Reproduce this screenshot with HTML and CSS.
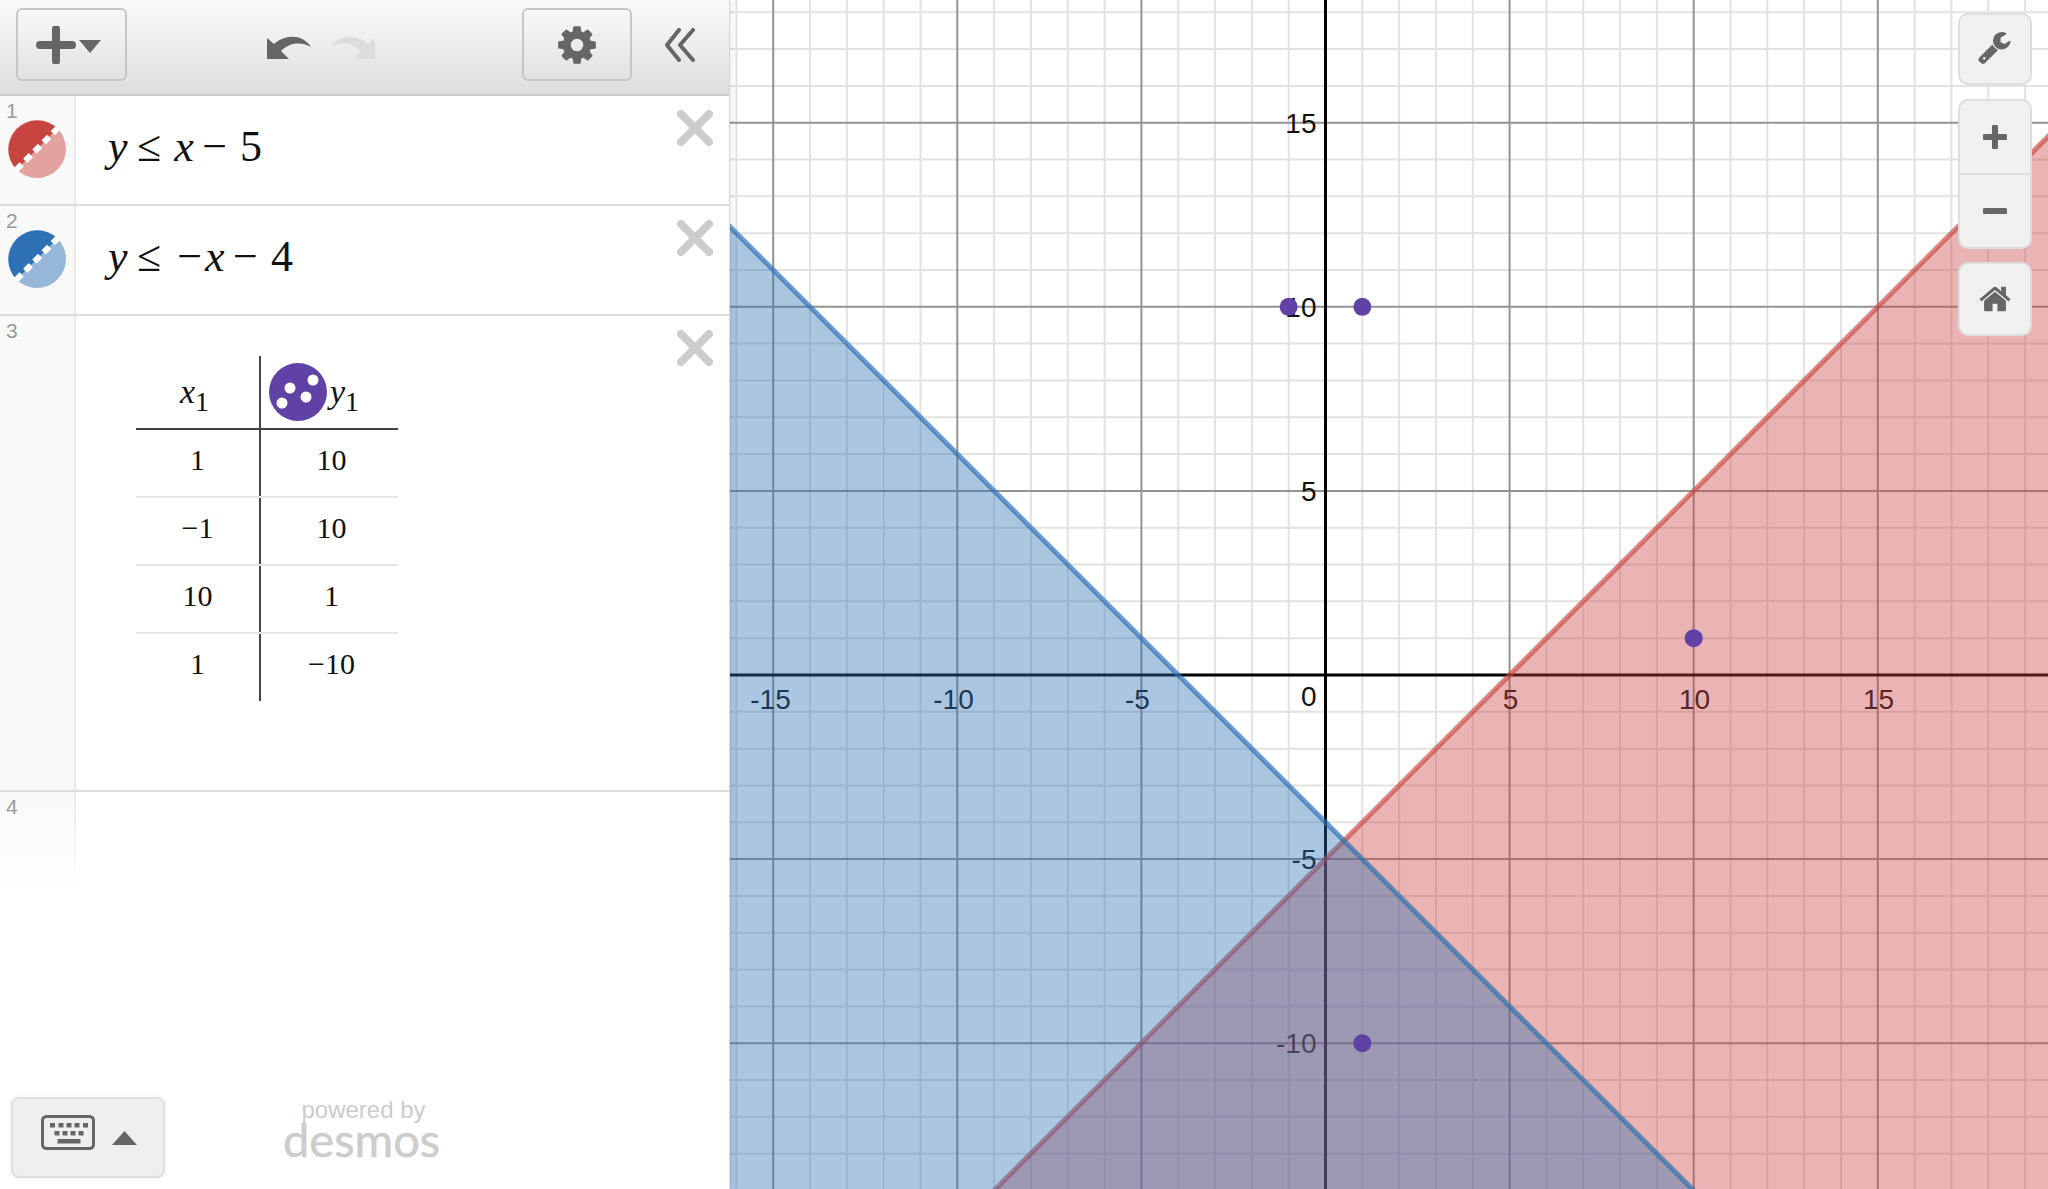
FILE: index.html
```html
<!DOCTYPE html>
<html lang="en">
<head>
    <meta charset="UTF-8">
    <title>Desmos Graphing Calculator</title>
    <link rel="stylesheet" href="styles.css">
</head>
<body>
    <div class="sidebar">
        <div class="topbar">
            <div class="btn btn-add">
                <svg width="66" height="38" viewBox="0 0 66 38">
                    <path d="M20 3V35M4 19H36" class="plus-stroke"/>
                    <path d="M43 14H65L54 27Z" class="icon-fill"/>
                </svg>
            </div>
            <div class="history">
                <svg width="44" height="24" viewBox="0 0 44 24"><path d="M0 24V3L7 9C16 1 34-3 44 12C33 6 22 8 14 16L22 24Z" class="icon-fill"/></svg>
                <svg width="44" height="24" viewBox="0 0 44 24"><path d="M44 24V3L37 9C28 1 10-3 0 12C11 6 22 8 30 16L22 24Z" class="icon-faded"/></svg>
            </div>
            <div class="btn btn-settings">
                <svg width="44" height="44" viewBox="0 0 1792 1792"><path d="M1152 896q0-106-75-181t-181-75-181 75-75 181 75 181 181 75 181-75 75-181zm512-109v222q0 12-8 23t-20 13l-185 28q-19 54-39 91 35 50 107 138 10 12 10 25t-9 23q-27 37-99 108t-94 71q-12 0-26-9l-138-108q-44 23-91 38-16 136-29 186-7 28-36 28h-222q-14 0-24.5-8.5t-11.5-21.5l-28-184q-49-16-90-37l-141 107q-10 9-25 9-14 0-25-11-126-114-165-168-7-10-7-23 0-12 8-23 15-21 51-66.5t54-70.5q-27-50-41-99l-183-27q-13-2-21-12.5t-8-23.5v-222q0-12 8-23t19-13l186-28q14-46 39-92-40-57-107-138-10-12-10-24 0-10 9-23 26-36 98.5-107.5t94.5-71.5q13 0 26 10l138 107q44-23 91-38 16-136 29-186 7-28 36-28h222q14 0 24.5 8.5t11.5 21.5l28 184q49 16 90 37l142-107q9-9 24-9 13 0 25 10 129 119 165 170 7 8 7 22 0 12-8 23-15 21-51 66.5t-54 70.5q26 50 41 98l183 28q13 2 21 12.5t8 23.5z" class="icon-fill"/></svg>
            </div>
            <svg class="collapse" width="32" height="34" viewBox="0 0 32 34"><path d="M15 2L3 17L15 32M29 2L16 17L29 32" class="chevrons"/></svg>
        </div>

        <div class="row">
            <div class="gutter">
                <div class="num">1</div>
                <svg class="swatch" width="58" height="58" viewBox="0 0 58 58">
                    <circle cx="29" cy="29" r="29" fill="#e3a19f"/>
                    <path d="M8.5 49.5A29 29 0 0 1 49.5 8.5Z" fill="#c74440"/>
                    <path d="M8 50L50 8" class="swatch-dash"/>
                </svg>
            </div>
            <div class="math">
                <i>y</i><span class="rel">≤</span><i>x</i><span class="bin">−</span><span>5</span>
            </div>
            <svg class="close" width="36" height="36" viewBox="0 0 36 36"><path d="M4 4L32 32M32 4L4 32" class="close-stroke"/></svg>
        </div>

        <div class="row">
            <div class="gutter">
                <div class="num">2</div>
                <svg class="swatch" width="58" height="58" viewBox="0 0 58 58">
                    <circle cx="29" cy="29" r="29" fill="#97b7d9"/>
                    <path d="M8.5 49.5A29 29 0 0 1 49.5 8.5Z" fill="#2d70b3"/>
                    <path d="M8 50L50 8" class="swatch-dash"/>
                </svg>
            </div>
            <div class="math">
                <i>y</i><span class="rel rel-neg">≤</span><span class="neg">−</span><i>x</i><span class="bin">−</span><span>4</span>
            </div>
            <svg class="close" width="36" height="36" viewBox="0 0 36 36"><path d="M4 4L32 32M32 4L4 32" class="close-stroke"/></svg>
        </div>

        <div class="row row-table">
            <div class="gutter">
                <div class="num">3</div>
            </div>
            <table class="xy-table">
                <tr>
                    <th class="th-x"><i>x</i><sub>1</sub></th>
                    <th>
                        <div class="th-points">
                            <svg width="58" height="58" viewBox="0 0 58 58">
                                <circle cx="29" cy="29" r="29" fill="#6042a6"/>
                                <circle cx="21" cy="25" r="5.5" fill="#fff"/>
                                <circle cx="44" cy="17" r="5.5" fill="#fff"/>
                                <circle cx="37" cy="34" r="5.5" fill="#fff"/>
                                <circle cx="13" cy="40" r="5.5" fill="#fff"/>
                            </svg>
                            <span><i>y</i><sub>1</sub></span>
                        </div>
                    </th>
                </tr>
                <tr><td>1</td><td>10</td></tr>
                <tr><td>−1</td><td>10</td></tr>
                <tr><td>10</td><td>1</td></tr>
                <tr><td>1</td><td>−10</td></tr>
            </table>
            <svg class="close" width="36" height="36" viewBox="0 0 36 36"><path d="M4 4L32 32M32 4L4 32" class="close-stroke"/></svg>
        </div>

        <div class="row row-empty">
            <div class="gutter gutter-fade">
                <div class="num">4</div>
            </div>
        </div>

        <div class="footer">
            <div class="keypad-btn">
                <svg width="54" height="35" viewBox="0 0 54 35">
                    <rect x="1.5" y="1.5" width="51" height="32" rx="4" class="kb-body"/>
                    <path d="M9 8h5v4.500h-5zM17.500 8h5v4.500h-5zM25.500 8h5v4.500h-5zM33.500 8h5v4.500h-5zM42 8h5v4.500h-5zM13.500 16h5v4.500h-5zM21.500 16h5v4.500h-5zM29.500 16h5v4.500h-5zM37.500 16h5v4.500h-5zM16.500 24h23v4.500h-23z" class="icon-fill"/>
                </svg>
                <svg width="25" height="14" viewBox="0 0 25 14"><path d="M12.500 0L25 14H0Z" class="icon-fill"/></svg>
            </div>
            <div class="powered">
                <div class="powered-by">powered by</div>
                <div class="powered-name">desmos</div>
            </div>
        </div>
    </div>

    <div class="graph">
        <svg class="plane" width="1318" height="1189" viewBox="0 0 1318 1189">
            <!-- 1 unit = 36.82px, origin at 595.5,675 -->
            <g transform="translate(595.5 675) scale(36.82 -36.82)">
                <path class="grid-minor" d="M-16-15V19M-14-15V19M-13-15V19M-12-15V19M-11-15V19M-9-15V19M-8-15V19M-7-15V19M-6-15V19M-4-15V19M-3-15V19M-2-15V19M-1-15V19M1-15V19M2-15V19M3-15V19M4-15V19M6-15V19M7-15V19M8-15V19M9-15V19M11-15V19M12-15V19M13-15V19M14-15V19M16-15V19M17-15V19M18-15V19M19-15V19"/>
                <path class="grid-minor" d="M-17 18H20M-17 17H20M-17 16H20M-17 14H20M-17 13H20M-17 12H20M-17 11H20M-17 9H20M-17 8H20M-17 7H20M-17 6H20M-17 4H20M-17 3H20M-17 2H20M-17 1H20M-17-1H20M-17-2H20M-17-3H20M-17-4H20M-17-6H20M-17-7H20M-17-8H20M-17-9H20M-17-11H20M-17-12H20M-17-13H20"/>
                <path class="grid-major" d="M-15-15V19M-10-15V19M-5-15V19M5-15V19M10-15V19M15-15V19M-17 15H20M-17 10H20M-17 5H20M-17-5H20M-17-10H20"/>
                <path class="axis" d="M0-15V19M-17 0H20"/>
            </g>
            <g class="labels" transform="translate(595.5 675)">
                <text x="-555" y="34">-15</text>
                <text x="-372" y="34">-10</text>
                <text x="-188" y="34">-5</text>
                <text x="185" y="34">5</text>
                <text x="369" y="34">10</text>
                <text x="553" y="34">15</text>
                <text class="label-y" x="-9" y="31">0</text>
                <text class="label-y" x="-9" y="-542">15</text>
                <text class="label-y" x="-9" y="-358">10</text>
                <text class="label-y" x="-9" y="-174">5</text>
                <text class="label-y" x="-9" y="194">-5</text>
                <text class="label-y" x="-9" y="378">-10</text>
            </g>
            <g transform="translate(595.5 675) scale(36.82 -36.82)">
                <path class="fill-red" d="M-9.200-14.200L19.800 14.800V-14.200Z"/>
                <path class="line-red" d="M-9.200-14.200L19.800 14.800"/>
                <path class="fill-blue" d="M-16.400 12.400L10.200-14.200H-16.400Z"/>
                <path class="line-blue" d="M-16.400 12.400L10.200-14.200"/>
                <g class="points">
                    <circle cx="1" cy="10" r="0.245"/>
                    <circle cx="-1" cy="10" r="0.245"/>
                    <circle cx="10" cy="1" r="0.245"/>
                    <circle cx="1" cy="-10" r="0.245"/>
                </g>
            </g>
        </svg>

        <div class="graph-tools">
            <div class="tool tool-wrench">
                <svg width="35" height="35" viewBox="0 0 1792 1792"><path d="M384 1344q0-26-19-45t-45-19-45 19-19 45 19 45 45 19 45-19 19-45zm644-420l-682 682q-37 37-90 37-52 0-91-37l-106-108q-38-36-38-90 0-53 38-91l681-681q39 98 114.500 173.500t173.500 114.500zm634-435q0 39-23 106-47 134-164.500 217.500t-258.500 83.500q-185 0-316.500-131.500t-131.500-316.500 131.500-316.500 316.500-131.500q58 0 121.500 16.500t107.500 46.500q16 11 16 28t-16 28l-293 169v224l193 107q5-3 79-48.500t135.500-81 70.500-35.500q15 0 23.500 10t8.500 25z" class="icon-fill"/></svg>
            </div>
            <div class="tool tool-zoom">
                <div class="zoom-half">
                    <svg width="24" height="24" viewBox="0 0 24 24"><path d="M12 2V22M2 12H22" class="zoom-stroke"/></svg>
                </div>
                <div class="zoom-half zoom-out">
                    <svg width="24" height="24" viewBox="0 0 24 24"><path d="M2 12H22" class="zoom-stroke"/></svg>
                </div>
            </div>
            <div class="tool tool-home">
                <svg width="34" height="34" viewBox="0 0 1792 1792"><path d="M1472 992v480q0 26-19 45t-45 19h-384v-384h-256v384h-384q-26 0-45-19t-19-45v-480q0-1 .5-3t.5-3l575-474 575 474q1 2 1 6zm223-69l-62 74q-8 9-21 11h-3q-13 0-21-7l-692-577-692 577q-12 8-24 7-13-2-21-11l-62-74q-8-10-7-23.500t11-21.500l719-599q32-26 76-26t76 26l244 204v-195q0-14 9-23t23-9h192q14 0 23 9t9 23v408l219 182q10 8 11 21.500t-7 23.500z" class="icon-fill"/></svg>
            </div>
        </div>
    </div>
</body>
</html>
```

FILE: styles.css
```css
* {
    box-sizing: border-box;
}
body {
    font-family: 'Liberation Sans', Arial, sans-serif;
    margin: 0;
    width: 2048px;
    height: 1189px;
    display: flex;
    overflow: hidden;
    background-color: #ffffff;
}
svg {
    display: block;
}
.icon-fill {
    fill: #666666;
}
.icon-faded {
    fill: #dddddd;
}

/* sidebar */
.sidebar {
    width: 730px;
    height: 1189px;
    display: flex;
    flex-direction: column;
    border-right: 1px solid #d8d8d8;
    position: relative;
    z-index: 1;
    box-shadow: 1px 0 6px rgba(0, 0, 0, 0.1);
    background-color: #ffffff;
}
.topbar {
    height: 96px;
    flex: none;
    display: flex;
    align-items: flex-start;
    padding: 8px 0 0 16px;
    background: linear-gradient(#fbfbfb, #dedede);
    border-bottom: 2px solid #cccccc;
}
.btn {
    height: 73px;
    display: flex;
    justify-content: center;
    align-items: center;
    border: 2px solid #c6c6c6;
    border-radius: 6px;
    background: linear-gradient(#f8f8f8, #e2e2e2);
}
.btn-add {
    width: 111px;
    padding-right: 6px;
}
.btn-settings {
    width: 110px;
}
.plus-stroke {
    fill: none;
    stroke: #666666;
    stroke-width: 8;
    stroke-linecap: round;
}
.history {
    width: 108px;
    margin: 27px 0 0 140px;
    margin-right: 147px;
    display: flex;
    justify-content: space-between;
}
.collapse {
    margin: 20px 0 0 32px;
}
.chevrons {
    fill: none;
    stroke: #666666;
    stroke-width: 4;
    stroke-linecap: round;
    stroke-linejoin: round;
}

/* expression rows */
.row {
    height: 110px;
    flex: none;
    display: flex;
    border-bottom: 2px solid #dddddd;
}
.row-table {
    height: 476px;
}
.row-empty {
    height: 100px;
    border-bottom: none;
}
.gutter {
    width: 76px;
    flex: none;
    background-color: #f9f9f9;
    border-right: 2px solid #eaeaea;
    padding: 6px 0 0 6px;
}
.gutter-fade {
    background: linear-gradient(#f9f9f9, #ffffff);
    border-image: linear-gradient(#eaeaea, #ffffff) 1;
}
.num {
    font-size: 21px;
    line-height: 18px;
    color: #999999;
}
.swatch {
    margin: 0 0 0 2px;
}
.math {
    font-family: 'Liberation Serif', serif;
    font-size: 44px;
    color: #111111;
    display: flex;
    height: 46px;
    line-height: 46px;
    margin: 28px 0 0 32px;
}
.rel {
    margin: 0 13px 0 9.5px;
}
.rel-neg {
    margin-right: 16px;
}
.neg {
    margin-right: 3px;
}
.bin {
    margin: 0 13px 0 8.5px;
}
.close {
    margin: 14px 16px 0 auto;
}
.close-stroke {
    fill: none;
    stroke: #cccccc;
    stroke-width: 8;
    stroke-linecap: round;
}

/* table */
.xy-table {
    border-collapse: collapse;
    table-layout: fixed;
    width: 262px;
    height: 344px;
    margin: 40px 0 0 60px;
    font-family: 'Liberation Serif', serif;
    font-size: 30px;
    color: #111111;
}
.xy-table th {
    height: 73px;
    font-weight: normal;
    font-size: 34px;
    border-bottom: 2px solid #444444;
    padding: 0;
}
.xy-table th:first-child,
.xy-table td:first-child {
    width: 124px;
    border-right: 2px solid #444444;
}
.xy-table td {
    height: 68px;
    text-align: center;
    padding: 0 0 7px 0;
    border-bottom: 2px solid #e6e6e6;
}
.xy-table tr:last-child td {
    border-bottom: none;
}
.xy-table td:last-child {
    padding-left: 4px;
}
.xy-table sub {
    font-size: 28px;
    line-height: 0;
}
.xy-table .th-x {
    padding-right: 6px;
}
.th-points {
    display: flex;
    align-items: center;
    padding-left: 8px;
}
.th-points span {
    margin-left: 3px;
}

/* footer */
.footer {
    margin-top: auto;
    display: flex;
    padding: 0 0 11px 11px;
}
.keypad-btn {
    width: 154px;
    height: 81px;
    display: flex;
    align-items: flex-start;
    gap: 17px;
    padding: 16px 0 0 28px;
    background-color: #efefef;
    border: 2px solid #e0e0e0;
    border-radius: 8px;
    box-shadow: 0 0 4px rgba(0, 0, 0, 0.08);
}
.keypad-btn svg:last-child {
    margin-top: 16px;
}
.kb-body {
    fill: none;
    stroke: #666666;
    stroke-width: 3;
}
.powered {
    margin-left: 118px;
    text-align: center;
    color: #cccccc;
    width: 157px;
}
.powered-by {
    font-size: 24px;
    line-height: 26px;
    padding-left: 4px;
}
.powered-name {
    font-family: 'Lato', sans-serif;
    font-size: 47px;
    line-height: 32px;
    -webkit-text-stroke: 0.5px #cccccc;
}

/* graph */
.graph {
    flex: 1;
    position: relative;
    overflow: hidden;
}
.plane path {
    vector-effect: non-scaling-stroke;
    fill: none;
}
.grid-minor {
    stroke: #e2e2e2;
    stroke-width: 2;
}
.grid-major {
    stroke: #939393;
    stroke-width: 2;
}
.axis {
    stroke: #000000;
    stroke-width: 3;
}
.labels text {
    font-family: 'Liberation Sans', Arial, sans-serif;
    font-size: 28px;
    fill: #111111;
    text-anchor: middle;
}
.labels .label-y {
    text-anchor: end;
}
.plane .fill-red {
    fill: #c74440;
    fill-opacity: 0.4;
}
.plane .fill-blue {
    fill: #2d70b3;
    fill-opacity: 0.4;
}
.line-red {
    stroke: #c74440;
    stroke-opacity: 0.65;
    stroke-width: 5;
}
.line-blue {
    stroke: #2d70b3;
    stroke-opacity: 0.7;
    stroke-width: 5;
}
.points circle {
    fill: #6042a6;
}
.swatch-dash {
    fill: none;
    stroke: #ffffff;
    stroke-width: 6;
    stroke-dasharray: 8 5;
}

/* buttons floating over the graph */
.graph-tools {
    position: absolute;
    top: 13px;
    right: 16px;
    width: 74px;
    display: flex;
    flex-direction: column;
    gap: 14px;
}
.tool {
    display: flex;
    justify-content: center;
    align-items: center;
    background-color: #f0f0f0;
    border: 2px solid #dddddd;
    border-radius: 10px;
}
.tool-wrench {
    height: 72px;
}
.tool-home {
    height: 74px;
    margin-top: -1px;
}
.tool-zoom {
    height: 150px;
    flex-direction: column;
}
.zoom-half {
    flex: 1;
    width: 100%;
    display: flex;
    justify-content: center;
    align-items: center;
}
.zoom-out {
    border-top: 2px solid #dddddd;
}
.zoom-stroke {
    fill: none;
    stroke: #666666;
    stroke-width: 6;
    stroke-linecap: round;
}
```
